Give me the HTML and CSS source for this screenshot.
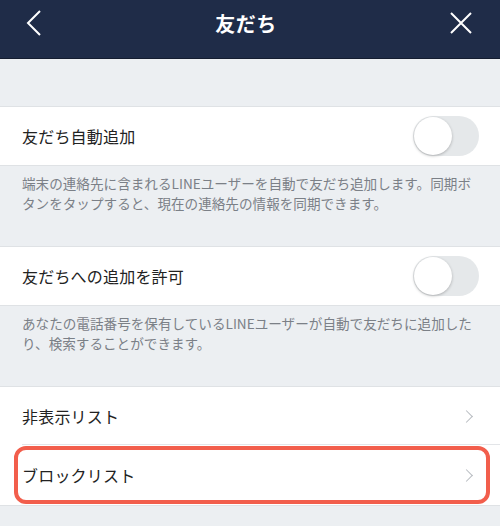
FILE: index.html
```html
<!DOCTYPE html>
<html lang="ja">
<head>
    <meta charset="UTF-8">
    <meta name="viewport" content="width=device-width, initial-scale=1.0">
    <title>友だち</title>
    <link rel="stylesheet" href="styles.css">
</head>
<body>

<!-- Header -->
<div class="header">
    <div class="header-bar">
        <svg class="back" width="16" height="26" viewBox="0 0 16 26">
            <path d="M14 1 L2 13 L14 25" fill="none" stroke="#fff" stroke-width="2"/>
        </svg>
        <h1>友だち</h1>
        <svg class="close" width="22" height="22" viewBox="0 0 22 22">
            <path d="M1 1 L21 21 M21 1 L1 21" fill="none" stroke="#fff" stroke-width="2"/>
        </svg>
    </div>
</div>

<div class="spacer"></div>

<!-- Auto add -->
<div class="row">
    <span class="label">友だち自動追加</span>
    <div class="toggle"><div class="knob"></div></div>
</div>
<p class="note">端末の連絡先に含まれるLINEユーザーを自動で友だち追加します。同期ボタンをタップすると、現在の連絡先の情報を同期できます。</p>

<!-- Allow add -->
<div class="row">
    <span class="label">友だちへの追加を許可</span>
    <div class="toggle"><div class="knob"></div></div>
</div>
<p class="note">あなたの電話番号を保有しているLINEユーザーが自動で友だちに追加したり、検索することができます。</p>

<!-- Lists -->
<div class="list">
    <div class="row link">
        <span class="label">非表示リスト</span>
        <span class="chevron"></span>
    </div>
    <div class="row link last">
        <span class="label">ブロックリスト</span>
        <span class="chevron"></span>
        <div class="highlight"></div>
    </div>
</div>

</body>
</html>
```

FILE: styles.css
```css
body {
    margin: 0;
    padding: 0;
    background-color: #eceff2;
    font-family: "Noto Sans CJK JP", "Noto Sans", sans-serif;
    color: #222;
}
.header {
    height: 58px;
    background-color: #1f2c48;
    border-bottom: 1px solid #141d30;
}
.header-bar {
    height: 46px;
    display: flex;
    align-items: center;
    justify-content: space-between;
    padding: 0 28px 0 26px;
}
.header h1 {
    margin: 0;
    font-size: 20px;
    font-weight: bold;
    color: #fff;
    letter-spacing: 0.5px;
}
.spacer {
    height: 47px;
}
.row {
    height: 58px;
    background-color: #fff;
    border-top: 1px solid #dfe2e5;
    border-bottom: 1px solid #dfe2e5;
    display: flex;
    align-items: center;
    justify-content: space-between;
    padding: 0 21px 0 22px;
    position: relative;
}
.label {
    font-size: 16px;
    letter-spacing: 0.2px;
}
.toggle {
    width: 66px;
    height: 40px;
    border-radius: 20px;
    background-color: #e5e8ea;
    position: relative;
}
.knob {
    width: 38px;
    height: 38px;
    border-radius: 50%;
    background-color: #fff;
    box-shadow: 0 1px 3px rgba(0, 0, 0, 0.25);
    margin: 1px;
}
.note {
    margin: 0;
    padding: 7px 22px 0 22px;
    height: 73px;
    font-size: 13.6px;
    line-height: 20px;
    color: #7b8087;
}
.list .row + .row {
    border-top: none;
}
.list .row:first-child {
    border-bottom: none;
}
.list .row:first-child::after {
    content: "";
    position: absolute;
    left: 22px;
    right: 0;
    bottom: 0;
    border-bottom: 1px solid #e3e5e8;
}
.chevron {
    width: 8px;
    height: 8px;
    border-top: 1.5px solid #b7bbc0;
    border-right: 1.5px solid #b7bbc0;
    transform: rotate(45deg);
    margin-right: 8px;
}
.last {
    height: 60px;
}
.highlight {
    position: absolute;
    left: 14px;
    right: 10px;
    top: 1px;
    bottom: 1px;
    border: 4px solid #f25e4c;
    border-radius: 12px;
}
```
